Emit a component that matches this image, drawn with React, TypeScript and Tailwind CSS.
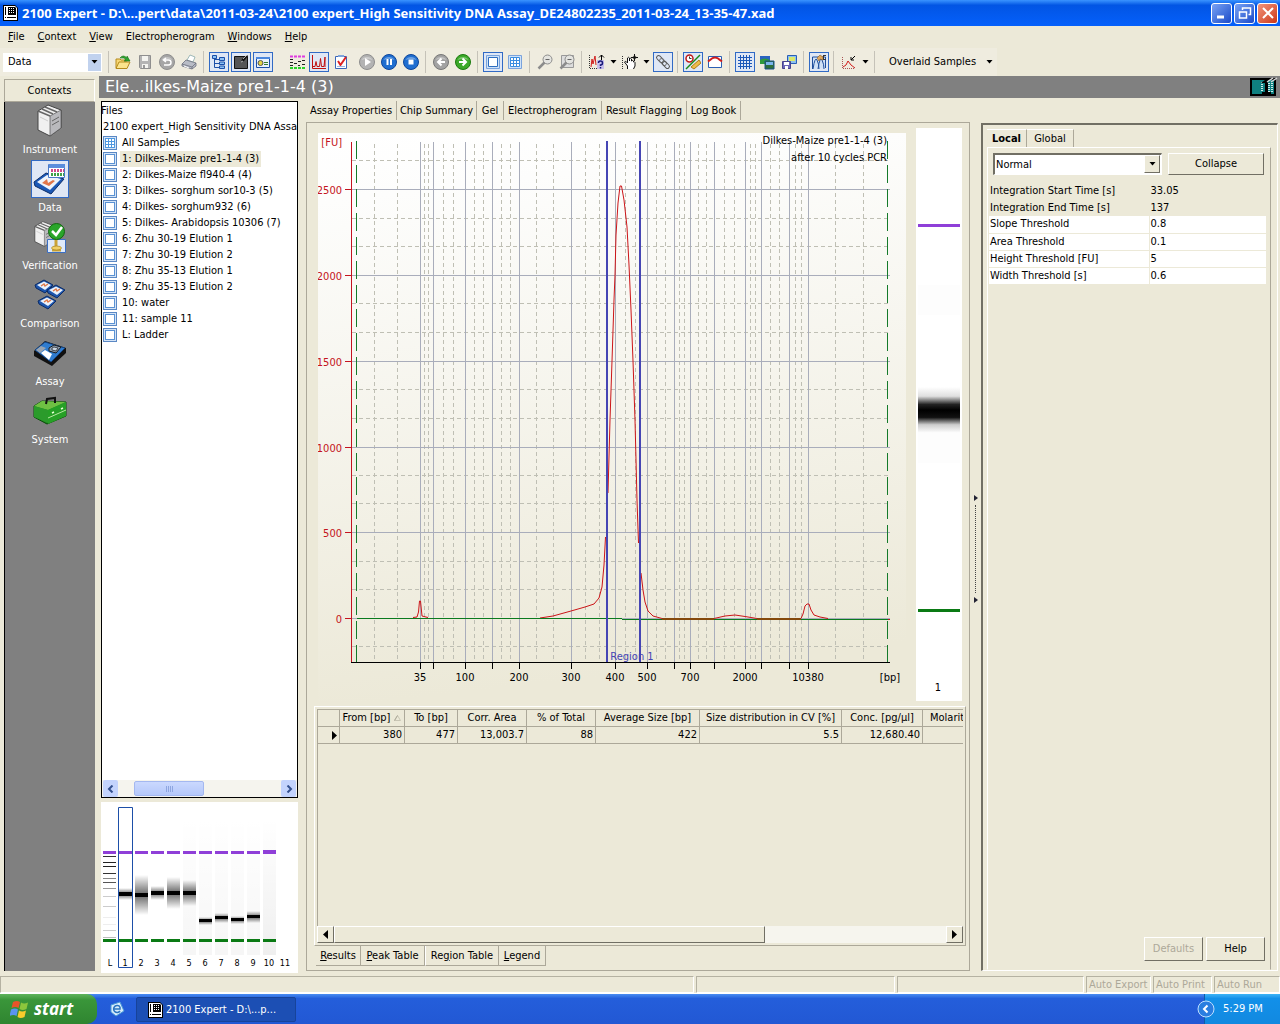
import { useState, type ReactNode } from 'react';
import clsx from 'clsx';

interface ToolItem {
  label: string;
  icon?: ReactNode;
  active?: boolean;
  menu?: boolean;
  gap?: 'line' | 'wide' | 'narrow';
}

const Icon = ({ children }: { children: ReactNode }) => (
  <svg viewBox="0 0 16 16" className="h-4 w-4 shrink-0" fill="none" aria-hidden="true">
    {children}
  </svg>
);

const Caret = () => (
  <svg viewBox="0 0 7 4" className="h-1 w-[7px]" aria-hidden="true">
    <path d="M.5 0h6l-3 3.500z" fill="#000" />
  </svg>
);

const Disc = ({ fill, edge, children }: { fill: string; edge: string; children: ReactNode }) => (
  <Icon>
    <circle cx="8" cy="8" r="7.5" fill={fill} stroke={edge} />
    <path d="M2.5 6a6 5 0 0 1 11 0q-5.500-2-11 0z" fill="#fff" opacity=".35" />
    {children}
  </Icon>
);

const Magnifier = () => (
  <>
    <circle cx="10.500" cy="5.500" r="4.500" fill="#e4e4e0" stroke="#8c8c8c" />
    <path d="M7.500 8.500 1.500 14.500" stroke="#8c8c8c" strokeWidth="2.500" />
    <path d="M8.500 5.500h4" stroke="#666" />
  </>
);

const AppIcon = () => (
  <Icon>
    <path d="M1 0h12l3 3v13H1z" fill="#000" />
    <path d="M2 1h11l2 2v12H2z" fill="#fff" />
    <path d="M6 2h7l1 1v7H6z" fill="#000" />
    <path d="M7.500 3v6M9.500 3v6M11.500 3v6" stroke="#fff" strokeDasharray="1 1" />
    <path d="M3.500 2v8" stroke="#000" />
    <path d="M3.500 12v1" stroke="#000" />
    <path d="M5 12.500h9" stroke="#000" />
  </Icon>
);

const tools: ToolItem[] = [
  {
    label: 'Open',
    icon: (
      <Icon>
        <path d="M1 14V5h4l1 1h5v2" fill="#f7d774" stroke="#b48a1c" />
        <path d="M1 14.500 4 8h11l-3 6.500z" fill="#fbe48c" stroke="#b48a1c" />
        <path d="M5 4q3-4 7 0V2l3 5h-6l2-1q-2-3-6-2z" fill="#2fa52f" stroke="#157015" strokeWidth=".6" />
      </Icon>
    ),
  },
  {
    label: 'Save',
    icon: (
      <Icon>
        <path d="M2.500 1.500h11v13h-10l-1-1z" fill="#b4b4b4" stroke="#8f8f8f" />
        <path d="M5 2h6v5H5zM5 10h6v4H5z" fill="#f4f4f0" />
        <path d="M6 11h2v3H6z" fill="#999" />
      </Icon>
    ),
  },
  {
    label: 'Undo',
    icon: (
      <Disc fill="#a6a6a6" edge="#8d8d8d">
        <path d="M5 11h4.500a2.500 2.500 0 0 0 0-5H5m2-2L4.500 6 7 8" stroke="#fff" strokeWidth="1.500" />
      </Disc>
    ),
  },
  {
    label: 'Print',
    icon: (
      <Icon>
        <path d="M6 6 9 1l5 2-2 5z" fill="#fff" stroke="#8aa" strokeWidth=".8" />
        <path d="m1 10 4-4 10 3v3l-4 3L1 12z" fill="#b8bcc6" stroke="#6b6f7c" strokeWidth=".8" />
        <path d="m1 10 10 3 4-4M11 13v2" stroke="#6b6f7c" strokeWidth=".8" />
        <path d="m3 12 5 2" stroke="#fff" />
      </Icon>
    ),
  },
  {
    label: 'Show tree',
    active: true,
    gap: 'line',
    icon: (
      <Icon>
        <path d="M3.500 4v9.500H8M3.500 5.500H8M3.500 9.500H8" stroke="#1b4fa8" />
        <path d="M1.500 1.500h4v3h-4zM8.500 3.500h5v3h-5zM8.500 8h5v2.500h-5zM8.500 12h5v2.500h-5z" fill="#8ec2f4" stroke="#1b4fa8" />
      </Icon>
    ),
  },
  {
    label: 'Annotations',
    active: true,
    icon: (
      <Icon>
        <path d="M1.500 2.500h13v12h-13z" fill="#555" stroke="#111" />
        <path d="m8 8 1-3 5-4 1 1-4 5z" fill="#111" />
        <path d="m10 5 4-4M8 8l2-1" stroke="#eee" strokeWidth=".7" />
      </Icon>
    ),
  },
  {
    label: 'Properties',
    active: true,
    icon: (
      <Icon>
        <path d="M1.500 3.500h13v10h-13z" fill="#e9f3fd" stroke="#1b4fa8" />
        <path d="M1 3h14v2H1z" fill="#4b87dd" />
        <circle cx="5.500" cy="9" r="2.500" fill="#e4d443" stroke="#555" />
        <path d="M9 8.500h4M9 10.500h4" stroke="#357b2c" />
      </Icon>
    ),
  },
  {
    label: 'Gel',
    gap: 'wide',
    icon: (
      <Icon>
        <path d="M1 2.500h15" stroke="#e03be0" strokeWidth="2" strokeDasharray="3 1" />
        <path d="M1 14h15" stroke="#2bd32b" strokeWidth="2" strokeDasharray="3 1" />
        <path d="M1 5.500h3M1 8.500h3M1 11.500h3M5 9.500h3M9 7.500h3M13 6.500h3M13 10.500h3M9 11.500h2" stroke="#222" />
      </Icon>
    ),
  },
  {
    label: 'Electropherogram',
    active: true,
    icon: (
      <Icon>
        <path d="M1.500 1v13.500H15" stroke="#c01010" />
        <path d="M2 12.500h2l1-5 1 5h2.500l1-8 1 8H13l1-9.500v10" stroke="#c01010" />
      </Icon>
    ),
  },
  {
    label: 'Results',
    icon: (
      <Icon>
        <path d="M2.500 2.500h11v12h-11z" fill="#fff" stroke="#3a66b8" />
        <path d="M5 1h6v2H5z" fill="#7ea4dc" />
        <path d="m5 7 2.500 4L13 3" stroke="#d22" strokeWidth="2" />
        <path d="M4 12.500h8" stroke="#9ab7e4" />
      </Icon>
    ),
  },
  {
    label: 'Start',
    gap: 'narrow',
    icon: (
      <Disc fill="#b3b3b3" edge="#8d8d8d">
        <path d="M6 4v8l6-4z" fill="#fff" />
      </Disc>
    ),
  },
  {
    label: 'Pause',
    icon: (
      <Disc fill="#1f6ed0" edge="#0e469a">
        <path d="M5.500 5h2v6h-2zM9 5h2v6H9z" fill="#fff" />
      </Disc>
    ),
  },
  {
    label: 'Stop',
    icon: (
      <Disc fill="#1f6ed0" edge="#0e469a">
        <path d="M5.500 5.500h5v5h-5z" fill="#fff" />
      </Disc>
    ),
  },
  {
    label: 'Previous',
    gap: 'line',
    icon: (
      <Disc fill="#a2a2a2" edge="#777">
        <path d="M12 8H5m3.500-3.500L5 8l3.500 3.500" stroke="#fff" strokeWidth="2" />
      </Disc>
    ),
  },
  {
    label: 'Next',
    icon: (
      <Disc fill="#3ba928" edge="#1c7a10">
        <path d="M4 8h7M7.500 4.500 11 8l-3.500 3.500" stroke="#fff" strokeWidth="2" />
      </Disc>
    ),
  },
  {
    label: 'Single view',
    active: true,
    gap: 'line',
    icon: (
      <Icon>
        <path d="M1.500 1.500h13v13h-13z" fill="#cfe2f8" stroke="#7aa3dc" />
        <path d="M3.500 3.500h9v9h-9z" fill="#fff" stroke="#2e6ec0" />
      </Icon>
    ),
  },
  {
    label: 'Grid view',
    icon: (
      <Icon>
        <path d="M1.500 1.500h13v13h-13z" fill="#cfe2f8" stroke="#7aa3dc" />
        <path d="M3.500 3.500h9v9h-9zM6.500 3v10M9.500 3v10M3 6.500h10M3 9.500h10" fill="#fff" stroke="#3b8de0" />
      </Icon>
    ),
  },
  { label: 'Zoom out', gap: 'line', icon: <Icon><Magnifier /></Icon> },
  {
    label: 'Zoom page',
    icon: (
      <Icon>
        <path d="M2.500 1.500h12v12h-12z" fill="#ddd" stroke="#999" />
        <Magnifier />
      </Icon>
    ),
  },
  {
    label: 'Peak help',
    menu: true,
    gap: 'line',
    icon: (
      <Icon>
        <path d="M.5 1v13M1 14.500h7" stroke="#333" strokeDasharray="1 1" />
        <path d="m2 13 1-8 1 5 2-8 1 9" stroke="#d01c1c" />
        <path d="M12.500 6V1M10 3.500l2.500-2.500L15 3.500" stroke="#000" />
        <path d="M8 6h7v9H8z" fill="#c8c0ec" />
        <path d="M9.500 9q0-2 2-2t2 2-2 2v1M11.500 13v1.500" stroke="#181878" strokeWidth="1.500" />
      </Icon>
    ),
  },
  {
    label: 'Pan',
    menu: true,
    icon: (
      <Icon>
        <path d="M.5 2v13" stroke="#333" strokeDasharray="1 1" />
        <path d="M5.500 15v-3l-3-4q1-2 3 1V4q1-1.500 2 0v3-2q1-1.500 2 0v2q1-1 2 0v1q1-.5 1.500.5V12l-1.500 3" fill="#fff" stroke="#111" />
        <path d="M12.500 0v7M9 3.500h7" stroke="#111" />
        <circle cx="12.500" cy="3.500" r="1.500" stroke="#111" strokeWidth=".7" />
      </Icon>
    ),
  },
  {
    label: 'Link axes',
    active: true,
    icon: (
      <Icon>
        <rect x="1" y="3" width="8" height="4" rx="2" transform="rotate(45 5 5)" stroke="#555" />
        <rect x="4" y="6" width="8" height="4" rx="2" transform="rotate(45 8 8)" stroke="#777" />
        <rect x="7" y="9" width="8" height="4" rx="2" transform="rotate(45 11 11)" stroke="#555" />
      </Icon>
    ),
  },
  {
    label: 'Time scale',
    active: true,
    gap: 'line',
    icon: (
      <Icon>
        <circle cx="4.500" cy="4.500" r="3.500" fill="#fff" stroke="#c01818" strokeWidth="1.500" />
        <path d="M4.500 2.500v2h2" stroke="#333" />
        <path d="M6 13 14 6l2 3-7 6z" fill="#eebc4a" stroke="#b07d18" />
        <path d="M1 15 15 1" stroke="#178a17" strokeWidth="1.500" />
      </Icon>
    ),
  },
  {
    label: 'Scale to peak',
    icon: (
      <Icon>
        <path d="M1.500 2.500h13v11h-13z" fill="#fff" stroke="#2a5fb4" />
        <path d="M1 7.500 3 6q5-5 10 0l2 1.500" stroke="#d01c1c" strokeWidth="2" />
      </Icon>
    ),
  },
  {
    label: 'Gridlines',
    active: true,
    gap: 'line',
    icon: (
      <Icon>
        <path d="M3.500 1v14M6.500 1v14M9.500 1v14M12.500 1v14M1 3.500h14M1 6.500h14M1 9.500h14M1 12.500h14" stroke="#1c58b8" />
      </Icon>
    ),
  },
  {
    label: 'Copy image',
    icon: (
      <Icon>
        <path d="M1 2h10v8H1z" fill="#2a63c0" />
        <path d="M1 6q5-3 10 0v4H1z" fill="#2f9a3c" />
        <path d="M6 7h9v8H6z" fill="#2f6f3a" stroke="#184e8a" />
        <path d="M7 8h7v3H7z" fill="#79b4ec" />
      </Icon>
    ),
  },
  {
    label: 'Export image',
    icon: (
      <Icon>
        <path d="M6.500 1.500h9v8h-9z" fill="#8cc1f0" stroke="#2a5fb4" />
        <path d="M8 3h6v4H8z" fill="#dbe86a" />
        <path d="M1.500 7.500h8v7h-8z" fill="#6c67b8" stroke="#47428e" />
        <path d="M3 8h5v3H3zM4 12h3v3H4z" fill="#fff" />
      </Icon>
    ),
  },
  {
    label: 'Overlay',
    active: true,
    gap: 'line',
    icon: (
      <Icon>
        <path d="M1.500 15V3h13v11" fill="#cfe0f6" stroke="#1f4e9c" />
        <path d="M2 15q2-13 4-9t2 9M7 15q2-13 4-9t2 9" stroke="#1f4e9c" />
        <path d="m6 4 3-3 3 2v3l-3-1-1 2z" fill="#e0a860" stroke="#8a5b20" strokeWidth=".6" />
        <path d="M12 1h3v1h-2v3h2v1h-3z" fill="#333" />
      </Icon>
    ),
  },
  {
    label: 'Peak find',
    menu: true,
    gap: 'line',
    icon: (
      <Icon>
        <path d="M1.500 3v12M2 14.500h12" stroke="#a55" strokeDasharray="1 1" />
        <path d="m2 13 3-2 2-4 3 4 4 3" stroke="#d01c1c" />
        <path d="m14 2-4 4m0-3v3h3" stroke="#000" />
      </Icon>
    ),
  },
];

const Slab = ({ children }: { children: ReactNode }) => (
  <svg viewBox="0 0 36 36" className="h-9 w-9" fill="none" aria-hidden="true">
    {children}
  </svg>
);

const Server = () => (
  <>
    <path d="m6 8 10-6 13 5v18L18 33 6 27z" fill="#f0f0f0" stroke="#444" />
    <path d="m18 13 11-6v18l-11 8z" fill="#b9b9bd" stroke="#555" strokeWidth=".7" />
    <path d="m6 8 12 5M10 6l11 5M13 4l12 5" stroke="#666" strokeWidth="1.500" />
    <path d="m20 18 7-4M20 22l7-4" stroke="#666" />
    <path d="m8 14 8 4" stroke="#ccc" />
  </>
);

const MiniChip = ({ x, y }: { x: number; y: number }) => (
  <g transform={`translate(${x} ${y})`}>
    <path d="m0 5 9-5 9 5-8 8-9-5z" fill="#1d55ad" stroke="#0d2c66" />
    <path d="m2 5 7-3.500L16 5l-6 5z" fill="#e9f2fd" />
    <path d="m6 6 3-2 1 2 3-2" stroke="#e07a4a" strokeWidth="1.500" />
  </g>
);

const contexts: { name: string; icon: ReactNode }[] = [
  { name: 'Instrument', icon: <Slab><Server /></Slab> },
  {
    name: 'Data',
    icon: (
      <Slab>
        <path d="m2 21 12-9 18 6-13 15-16-8z" fill="#1b58b6" stroke="#0c2c68" />
        <path d="m5 21 10-7 14 4-11 11z" fill="#eef4fc" />
        <path d="m10 22 5-4 1 4 5-3 2 1-6 5z" fill="#e0764a" />
        <path d="M16.500 3.500h16v13h-16z" fill="#fff" stroke="#4a7ac8" />
        <path d="M17 3h16v4H17z" fill="#5a8ddc" />
        <path d="M19 9.500h13" stroke="#d04a8a" strokeWidth="3" strokeDasharray="2 1" />
        <path d="M19 13.500h13" stroke="#3ea04a" strokeWidth="3" strokeDasharray="2 1" />
      </Slab>
    ),
  },
  {
    name: 'Verification',
    icon: (
      <Slab>
        <g transform="translate(-2 1) scale(.8)"><Server /></g>
        <path d="M15.500 20.500h18v13h-18z" fill="#dfeafa" stroke="#3a6fc4" />
        <path d="M24 19v9M20 31h9" stroke="#caa438" strokeWidth="3" />
        <ellipse cx="24.500" cy="29" rx="5" ry="2" fill="#f0d068" stroke="#a8821c" strokeWidth=".7" />
        <circle cx="24.500" cy="12.500" r="8" fill="#2aa52a" stroke="#11660f" />
        <path d="m20 12 4 4 6-8" stroke="#fff" strokeWidth="2.500" />
      </Slab>
    ),
  },
  {
    name: 'Comparison',
    icon: (
      <Slab>
        <MiniChip x={3} y={3} />
        <MiniChip x={15} y={8} />
        <MiniChip x={6} y={19} />
      </Slab>
    ),
  },
  {
    name: 'Assay',
    icon: (
      <Slab>
        <path d="m2 16 11-10 21 7v5L20 31 2 21z" fill="#111" />
        <path d="m3 15 10-8 20 6-14 14z" fill="#2f7ccf" stroke="#14427e" />
        <path d="m4 15 5-4 5 2-6 5z" fill="#9aa4b0" />
        <path d="m9 18 4-3 7 4-3 6z" fill="#fff" />
        <path d="m17 13 5-3 7 2-5 6-7-2z" fill="#8fa0b4" stroke="#1a1a1a" />
        <path d="m20 13 2-1 4 1-2 3-4-1z" fill="#c9d4e0" stroke="#1a1a1a" strokeWidth=".7" />
      </Slab>
    ),
  },
  {
    name: 'System',
    icon: (
      <Slab>
        <path d="m2 13 8-5 24 1v14L15 31 2 24z" fill="#1f8a1f" stroke="#0a4a0a" />
        <path d="m2 13 8-5 24 1-18 8z" fill="#6fc043" />
        <path d="m2 13 14 4v13L2 24z" fill="#2b9b2b" />
        <path d="m16 17 18-8v14l-18 8z" fill="#26a026" />
        <path d="m16 25 18-8" stroke="#b4e8a0" />
        <path d="m20 20 2-1m7-3 2-1" stroke="#e8ffd8" strokeWidth="1.500" />
        <path d="m14 11 1-5 8-1v5" stroke="#111" strokeWidth="2" />
      </Slab>
    ),
  },
];

const samples = [
  '1: Dilkes-Maize pre1-1-4 (3)',
  '2: Dilkes-Maize fl940-4 (4)',
  '3: Dilkes- sorghum sor10-3 (5)',
  '4: Dilkes- sorghum932 (6)',
  '5: Dilkes- Arabidopsis 10306 (7)',
  '6: Zhu 30-19 Elution 1',
  '7: Zhu 30-19 Elution 2',
  '8: Zhu 35-13 Elution 1',
  '9: Zhu 35-13 Elution 2',
  '10: water',
  '11: sample 11',
  'L: Ladder',
];

const mainTabs = [
  { name: 'Assay Properties', width: 'w-[91px]' },
  { name: 'Chip Summary', width: 'w-[80px]' },
  { name: 'Gel', width: 'w-[27px]' },
  { name: 'Electropherogram', width: 'w-[98px]' },
  { name: 'Result Flagging', width: 'w-[85px]' },
  { name: 'Log Book', width: 'w-[54px]' },
];

const solidX = [420, 433, 465, 492, 519, 571, 615, 647, 674, 690, 714, 745, 761, 789, 808];
const dashedX = [
  374, 397, 424, 428, 443, 453, 474, 483, 501, 510, 536, 553, 585, 599, 625, 635, 656, 665, 679, 684, 698, 706,
  724, 734, 750, 755, 770, 779, 795, 801, 835, 863,
];
const solidY = [
  { y: 189, label: '2500' },
  { y: 275, label: '2000' },
  { y: 361, label: '1500' },
  { y: 447, label: '1000' },
  { y: 532, label: '500' },
  { y: 618, label: '0' },
];
const dashedY = [160, 218, 246, 303, 332, 389, 418, 475, 503, 561, 589, 646];
const xLabels: [number, string][] = [
  [420, '35'],
  [465, '100'],
  [519, '200'],
  [571, '300'],
  [615, '400'],
  [647, '500'],
  [690, '700'],
  [745, '2000'],
  [808, '10380'],
];

const trace =
  'M413 617.500L417 617L418.500 612L419.500 601H420.500L422 616L428 617.500' +
  'M540 618L553 616L571 611L585 607L594 604L599 598L602 587L604 565L605.500 537' +
  'M608 493L610 420L612 361L614 300L615 275L616 235L618 203L620 186H621.500L624 200L627 227L629 265L631 310L633 361L635 420L637 500L638.500 543' +
  'M641 573L643 590L645 602L648 611L653 616L662 618.500M714 618.500L725 616L735 615L745 616.500L757 618.500' +
  'M801 618.500L803 614L805 606L807 604H809L811 610L814 615L820 617L828 618.500';

function Chart() {
  return (
    <svg viewBox="318 133 588 568" className="h-[568px] w-full min-w-0 flex-1 text-[11px]" role="img" aria-label="Electropherogram">
      <defs>
        <linearGradient id="chartPaper" x1="0" y1="0" x2=".12" y2="1">
          <stop offset="0" stopColor="#fff" />
          <stop offset=".12" stopColor="#fdfdfc" />
          <stop offset="1" stopColor="#ece9d8" />
        </linearGradient>
      </defs>
      <rect x="318" y="133" width="588" height="568" fill="url(#chartPaper)" />
      <g fill="none" shapeRendering="crispEdges">
        {dashedX.map((x) => (
          <path key={x} d={`M${x + 0.5} 144V662`} stroke="#bfbfb4" strokeDasharray="4 3" />
        ))}
        {dashedY.map((y) => (
          <path key={y} d={`M352 ${y + 0.5}H888`} stroke="#bfbfb4" strokeDasharray="4 3" />
        ))}
        {solidX.map((x) => (
          <path key={x} d={`M${x + 0.5} 142V662`} stroke="#a9adbb" />
        ))}
        {solidY.map(({ y }) => (
          <path key={y} d={`M352 ${y + 0.5}H890`} stroke="#a9adbb" />
        ))}
      </g>
      <path d={trace} fill="none" stroke="#cc1518" />
      <g fill="none" shapeRendering="crispEdges">
        <path d="M357 618.500H622M622 619.500H888" stroke="#0a7a1e" />
        <path d="M662 619H714M757 619H801" stroke="#84490c" strokeWidth="2" />
        <path d="M888 619.500H890" stroke="#c41420" />
        <path d="M356.500 141V662M887.500 141V662" stroke="#157a2a" strokeDasharray="18 6" />
        <path d="M607 141V662M640 141V662" stroke="#4545b4" strokeWidth="2" />
        <path d="M351.500 142V662" stroke="#c41420" />
        {solidY.map(({ y }) => (
          <path key={y} d={`M345 ${y + 0.5}H351`} stroke="#c41420" />
        ))}
        <path d="M351 662.500H890" stroke="#000" />
        {solidX.map((x) => (
          <path key={x} d={`M${x + 0.5} 662V669`} stroke="#000" />
        ))}
      </g>
      <g fill="#c41420" textAnchor="end">
        <text x="342" y="146">[FU]</text>
        {solidY.map(({ y, label }) => (
          <text key={y} x="342" y={y + 5}>{label}</text>
        ))}
      </g>
      <g textAnchor="middle">
        {xLabels.map(([x, label]) => (
          <text key={label} x={x} y="681">{label}</text>
        ))}
        <text x="890" y="681">[bp]</text>
        <text x="632" y="660" fill="#4545b4">Region 1</text>
      </g>
      <g textAnchor="end">
        <text x="887" y="144">Dilkes-Maize pre1-1-4 (3)</text>
        <text x="887" y="161">after 10 cycles PCR</text>
      </g>
    </svg>
  );
}

function Lane() {
  return (
    <svg viewBox="916 128 46 573" className="h-[573px] w-[46px] shrink-0 text-[11px]" role="img" aria-label="Gel lane 1">
      <defs>
        <linearGradient id="laneBand" x1="0" y1="0" x2="0" y2="1">
          <stop offset="0" stopColor="#fff" />
          <stop offset=".2" stopColor="#e0e0e0" />
          <stop offset=".38" stopColor="#222" />
          <stop offset=".5" stopColor="#000" />
          <stop offset=".66" stopColor="#111" />
          <stop offset=".82" stopColor="#ccc" />
          <stop offset="1" stopColor="#fff" />
        </linearGradient>
      </defs>
      <path d="M916 128h46v573h-46z" fill="#fff" />
      <path d="M918 285h42v30h-42zM918 433h42v30h-42z" fill="#fdfdfd" />
      <path d="M918 387h42v46h-42z" fill="url(#laneBand)" />
      <path d="M918 224h42v3h-42z" fill="#8f3fd8" />
      <path d="M918 609h42v3h-42z" fill="#0a7a14" />
      <text x="938" y="691" textAnchor="middle">1</text>
    </svg>
  );
}

const ladder: [number, string][] = [
  [856, '#333'], [862, '#222'], [866, '#222'], [873, '#333'], [878, '#888'], [882, '#555'], [888, '#999'],
  [896, '#ccc'], [906, '#ccc'], [917, '#eee'], [924, '#eee'], [930, '#ccc'], [937, '#bbb'],
];
const gelLanes = [
  { name: '1', band: 894, glow: 6, tint: '#fff' },
  { name: '2', band: 895, glow: 20, tint: '#fff' },
  { name: '3', band: 893, glow: 7, tint: '#fff' },
  { name: '4', band: 893, glow: 16, tint: '#fff' },
  { name: '5', band: 893, glow: 13, tint: '#f6f6f6' },
  { name: '6', band: 921, glow: 4, tint: '#f6f6f6' },
  { name: '7', band: 918, glow: 5, tint: '#f6f6f6' },
  { name: '8', band: 920, glow: 4, tint: '#f6f6f6' },
  { name: '9', band: 917, glow: 6, tint: '#f6f6f6' },
  { name: '10', band: 0, glow: 0, tint: '#efefef' },
  { name: '11', band: -1, glow: 0, tint: '#fff' },
];

function GelOverview() {
  return (
    <svg viewBox="101 802 197 171" className="h-[171px] w-full bg-white text-[9px]" role="img" aria-label="Gel overview">
      <defs>
        <linearGradient id="glow" x1="0" y1="0" x2="0" y2="1">
          <stop offset="0" stopColor="#000" stopOpacity="0" />
          <stop offset=".5" stopColor="#000" stopOpacity=".6" />
          <stop offset="1" stopColor="#000" stopOpacity="0" />
        </linearGradient>
        <linearGradient id="laneFade" x1="0" y1="0" x2="0" y2="1">
          <stop offset="0" stopColor="#fff" />
          <stop offset=".7" stopColor="#fff" stopOpacity=".3" />
          <stop offset="1" stopColor="#fff" stopOpacity="0" />
        </linearGradient>
      </defs>
      {ladder.map(([y, color]) => (
        <rect key={y} x="103" y={y} width="13" height="1" fill={color} />
      ))}
      <path d="M103 851h13v3h-13z" fill="#8f3fd8" />
      <path d="M103 939h13v3h-13z" fill="#0a7a14" />
      <text x="110" y="966" textAnchor="middle">L</text>
      {gelLanes.map(({ name, band, glow, tint }, i) => {
        const x = 119 + i * 16;
        const thick = band > 910 ? 3 : 4;
        return (
          <g key={name}>
            {band >= 0 && (
              <>
                <rect x={x} y="820" width="13" height="135" fill={tint} />
                <rect x={x} y="820" width="13" height="135" fill="url(#laneFade)" />
                {band > 0 && <rect x={x} y={band - glow} width="13" height={glow * 2} fill="url(#glow)" />}
                {band > 0 && <rect x={x} y={band - 2} width="13" height={thick} fill="#000" />}
                <rect x={x} y={name === '10' ? 850 : 851} width="13" height={name === '10' ? 4 : 3} fill="#8f3fd8" />
                <rect x={x} y="939" width="13" height="3" fill="#0a7a14" />
              </>
            )}
            <text x={x + 6} y="966" textAnchor="middle">{name}</text>
          </g>
        );
      })}
      <path d="M118.500 807.500h14v160h-14z" fill="none" stroke="#1d4fa8" />
    </svg>
  );
}

const SampleIcon = ({ grid }: { grid?: boolean }) => (
  <svg viewBox="0 0 14 14" className="h-3.5 w-3.5 shrink-0" fill="none" shapeRendering="crispEdges" aria-hidden="true">
    <path d="M.5.5h13v13H.5z" fill="#d4e4f7" stroke="#5b88c4" />
    {grid ? (
      <path d="M2.500 2.500h9v9h-9zM5.500 2v10M8.500 2v10M2 5.500h10M2 8.500h10" fill="#fff" stroke="#4f98e0" />
    ) : (
      <path d="M2.500 2.500h9v9h-9z" fill="#fff" stroke="#5a92d4" />
    )}
  </svg>
);

const Chevron = ({ flip }: { flip?: boolean }) => (
  <svg viewBox="0 0 8 8" className={clsx('h-2 w-2', flip && 'rotate-180')} fill="none" aria-hidden="true">
    <path d="M5.500.5 2 4l3.500 3.500" stroke="#33508f" strokeWidth="2" />
  </svg>
);

const Wedge = ({ flip }: { flip?: boolean }) => (
  <svg viewBox="0 0 5 9" className={clsx('h-[9px] w-[5px]', flip && 'rotate-180')} aria-hidden="true">
    <path d="M5 0v9L0 4.500z" fill="#000" />
  </svg>
);

const SmallWedge = () => (
  <svg viewBox="0 0 4 6" className="h-1.5 w-1" aria-hidden="true">
    <path d="M0 0v6l4-3z" fill="#223" />
  </svg>
);

const columns = [
  { name: 'From [bp]', value: '380', width: 'w-[65px]', sorted: true },
  { name: 'To [bp]', value: '477', width: 'w-[53px]' },
  { name: 'Corr. Area', value: '13,003.7', width: 'w-[69px]' },
  { name: '% of Total', value: '88', width: 'w-[69px]' },
  { name: 'Average Size [bp]', value: '422', width: 'w-[104px]' },
  { name: 'Size distribution in CV [%]', value: '5.5', width: 'w-[142px]' },
  { name: 'Conc. [pg/µl]', value: '12,680.40', width: 'w-[81px]' },
];

const settings = [
  { name: 'Integration Start Time [s]', value: '33.05', locked: true },
  { name: 'Integration End Time [s]', value: '137', locked: true },
  { name: 'Slope Threshold', value: '0.8' },
  { name: 'Area Threshold', value: '0.1' },
  { name: 'Height Threshold [FU]', value: '5' },
  { name: 'Width Threshold [s]', value: '0.6' },
];

const raised = 'border border-t-white border-l-white border-r-[#716f64] border-b-[#716f64] bg-[#ece9d8]';

function TitleBar() {
  const box = 'flex h-[21px] w-[21px] items-center justify-center rounded-[3px] border border-white';
  return (
    <header className="flex h-[26px] shrink-0 items-center bg-linear-to-b from-[#3a93ff] via-[#0255e4] via-20% to-[#0560fb] pr-[2px] pl-[2px]">
      <AppIcon />
      <h1 className="ml-1 flex-1 font-['Noto_Sans','Open_Sans',sans-serif] text-[13px] leading-5 font-bold whitespace-nowrap text-white">
        2100 Expert - D:\...pert\data\2011-03-24\2100 expert_High Sensitivity DNA Assay_DE24802235_2011-03-24_13-35-47.xad
      </h1>
      <div className="flex gap-[2px]">
        <button aria-label="Minimize" className={clsx(box, 'bg-linear-to-br from-[#7aa2f4] to-[#1c48c8]')}>
          <Icon><path d="M3 12h7" stroke="#fff" strokeWidth="3" /></Icon>
        </button>
        <button aria-label="Restore" className={clsx(box, 'bg-linear-to-br from-[#7aa2f4] to-[#1c48c8]')}>
          <Icon>
            <path d="M5.500 5V3h8v6.500h-2" stroke="#fff" strokeWidth="1.500" />
            <path d="M2.500 7h7v6h-7z" stroke="#fff" strokeWidth="1.500" />
          </Icon>
        </button>
        <button aria-label="Close" className={clsx(box, 'bg-linear-to-br from-[#f0937a] to-[#cc3310]')}>
          <Icon><path d="m3 3 10 10M13 3 3 13" stroke="#fff" strokeWidth="2" /></Icon>
        </button>
      </div>
    </header>
  );
}

function MenuBar() {
  return (
    <nav className="flex h-[22px] shrink-0 items-center gap-[13px] pl-2">
      {['File', 'Context', 'View', 'Electropherogram', 'Windows', 'Help'].map((item) => (
        <button key={item} className="leading-4">
          {item === 'Electropherogram' ? item : <><span className="underline">{item[0]}</span>{item.slice(1)}</>}
        </button>
      ))}
    </nav>
  );
}

function Toolbar() {
  return (
    <div className="flex h-7 shrink-0 items-center bg-[#efecdf]" role="toolbar">
      <div className="relative ml-[3px] flex w-[99px]">
        <select aria-label="Context" className="h-[19px] w-full appearance-none bg-white pl-[5px] outline-none">
          <option>Data</option>
        </select>
        <span className="pointer-events-none absolute top-px right-px flex h-[17px] w-[13px] items-center justify-center bg-[#c1d2ee]">
          <Caret />
        </span>
      </div>
      <span className="mr-[3px] ml-[6px] h-[22px] w-px bg-[#c5c2b8]" />
      {tools.map(({ label, icon, active, menu, gap }) => (
        <div key={label} className="flex items-center">
          {gap === 'line' && <span className="mr-1 ml-[3px] h-[22px] w-px bg-[#c5c2b8]" />}
          {gap === 'wide' && <span className="w-3" />}
          {gap === 'narrow' && <span className="w-1" />}
          <button
            aria-label={label}
            className={clsx(
              'mx-px flex h-5 w-5 items-center justify-center border',
              active ? 'border-[#316ac5] bg-[#dfe7f5]' : 'border-transparent',
            )}
          >
            {icon}
          </button>
          {menu && (
            <button aria-label={`${label} options`} className="flex h-5 w-[11px] items-center justify-center">
              <Caret />
            </button>
          )}
        </div>
      ))}
      <span className="mr-[14px] ml-[3px] h-[22px] w-px bg-[#c5c2b8]" />
      <button className="flex items-center gap-[10px]">
        Overlaid Samples
        <Caret />
      </button>
      <span className="ml-1 h-full flex-1 bg-[#ece9d8]" />
    </div>
  );
}

function ContextBar({ current, onSelect }: { current: string; onSelect: (name: string) => void }) {
  return (
    <aside className="flex w-[99px] shrink-0 flex-col pt-[3px] pr-1 pb-1 pl-1">
      <h2 className="flex h-[23px] shrink-0 items-center justify-center border border-[#aca899] border-r-white leading-4">
        Contexts
      </h2>
      <div className="flex flex-1 flex-col items-center border-l border-black bg-[#808080]">
        {contexts.map(({ name, icon }) => (
          <button key={name} onClick={() => onSelect(name)} className="flex h-[58px] w-full flex-col items-center text-white">
            <span
              className={clsx(
                'flex h-[38px] w-[38px] shrink-0 items-center justify-center border',
                name === current ? 'border-[#316ac5] bg-[#dfe7f5]' : 'border-transparent',
              )}
            >
              {icon}
            </span>
            <span className="leading-5">{name}</span>
          </button>
        ))}
      </div>
    </aside>
  );
}

function FileTree({ selected, onSelect }: { selected: number; onSelect: (i: number) => void }) {
  return (
    <div className="flex w-[197px] shrink-0 flex-col gap-1 pb-[2px]">
      <div className="flex min-h-0 flex-1 flex-col border border-black bg-white">
        <div className="flex-1 overflow-hidden pt-px leading-4 whitespace-nowrap">
          <p className="-ml-px">Files</p>
          <p className="pl-px">2100 expert_High Sensitivity DNA Assay</p>
          <button className="flex items-center gap-[3px] pl-px">
            <SampleIcon grid />
            <span className="px-[2px]">All Samples</span>
          </button>
          {samples.map((sample, i) => (
            <button key={sample} onClick={() => onSelect(i)} className="flex items-center gap-[3px] pl-px">
              <SampleIcon />
              <span className={clsx('px-[2px]', i === selected && 'bg-[#ece9d8]')}>{sample}</span>
            </button>
          ))}
        </div>
        <div className="flex h-[17px] shrink-0 items-stretch bg-[#f5f4ee] px-px">
          <button aria-label="Scroll left" className="flex w-[15px] items-center justify-center rounded-[2px] bg-[#c3d3fd]">
            <Chevron />
          </button>
          <div className="flex flex-1 py-px">
            <span className="ml-4 flex w-[70px] items-center justify-center gap-px rounded-[2px] border border-[#a4b8f0] bg-linear-to-b from-[#cad8fe] to-[#b5c8fa]">
              {[0, 1, 2, 3].map((n) => <i key={n} className="h-1.5 w-px bg-[#8ea6e0]" />)}
            </span>
          </div>
          <button aria-label="Scroll right" className="flex w-[15px] items-center justify-center rounded-[2px] bg-[#c3d3fd]">
            <Chevron flip />
          </button>
        </div>
      </div>
      <GelOverview />
    </div>
  );
}

function ResultTable() {
  const cell = 'border-r border-b border-[#aca899]';
  return (
    <div className="mt-[5px] mr-[3px] ml-[7px] flex min-h-0 flex-1 flex-col border border-white border-r-[#aca899] border-b-[#aca899] p-[2px]">
      <div className="min-h-0 flex-1 overflow-hidden border-t border-l border-[#aca899]">
        <table className="w-full table-fixed border-separate border-spacing-0 whitespace-nowrap">
          <thead>
            <tr className="h-4">
              <th className={clsx(cell, 'w-[22px] p-0')} aria-label="Row" />
              {columns.map(({ name, width, sorted }) => (
                <th key={name} className={clsx(cell, width, 'p-0 leading-4 font-normal')}>
                  <span className="flex items-center justify-center gap-1">
                    {name}
                    {sorted && (
                      <svg viewBox="0 0 7 6" className="h-1.5 w-[7px]" fill="none" aria-hidden="true">
                        <path d="m.5 5.500 3-5 3 5z" stroke="#c8c5b4" />
                        <path d="m.5 5.500 3-5" stroke="#aca899" />
                      </svg>
                    )}
                  </span>
                </th>
              ))}
              <th className="overflow-hidden border-b border-[#aca899] p-0 pl-[7px] text-left leading-4 font-normal">Molarity</th>
            </tr>
          </thead>
          <tbody>
            <tr className="h-4">
              <td className={clsx(cell, 'p-0')}>
                <span className="flex justify-end pr-[2px]"><Wedge flip /></span>
              </td>
              {columns.map(({ name, value }) => (
                <td key={name} className={clsx(cell, 'p-0 pr-[2px] text-right leading-4')}>{value}</td>
              ))}
              <td className="border-b border-[#aca899] p-0" />
            </tr>
          </tbody>
        </table>
      </div>
      <div className="flex h-[17px] shrink-0 bg-[#f6f5ee]">
        <button aria-label="Scroll left" className={clsx(raised, 'flex w-[17px] items-center justify-center')}><Wedge /></button>
        <span className={clsx(raised, 'w-2/3')} />
        <span className="flex-1" />
        <button aria-label="Scroll right" className={clsx(raised, 'flex w-[17px] items-center justify-center')}><Wedge flip /></button>
      </div>
    </div>
  );
}

function CenterPanel() {
  const [tab, setTab] = useState('Region Table');
  const bottomTabs = [
    { name: 'Results', at: 0, width: 'w-[45px]' },
    { name: 'Peak Table', at: 0, width: 'w-[64px]' },
    { name: 'Region Table', at: 2, width: 'w-[74px]' },
    { name: 'Legend', at: 0, width: 'w-[47px]' },
  ];
  return (
    <main className="ml-2 flex min-w-0 flex-1 flex-col pb-1">
      <div className="flex h-[21px] shrink-0" role="tablist">
        {mainTabs.map(({ name, width }) => (
          <button
            key={name}
            role="tab"
            aria-selected={name === 'Electropherogram'}
            className={clsx('h-[19px] border-r border-[#aca899] pt-px leading-[18px] whitespace-nowrap', width)}
          >
            {name}
          </button>
        ))}
      </div>
      <div className="flex min-h-0 flex-1 flex-col border border-[#aca899]">
        <div className="flex shrink-0 items-end gap-[10px] pt-[5px] pr-[7px] pl-[11px]">
          <Chart />
          <Lane />
        </div>
        <ResultTable />
        <div className="flex h-6 shrink-0 pl-[9px]" role="tablist">
          {bottomTabs.map(({ name, at, width }) => (
            <button
              key={name}
              role="tab"
              aria-selected={name === tab}
              onClick={() => setTab(name)}
              className={clsx('h-5 border-r border-b border-[#aca899] whitespace-nowrap', width, name === tab && 'border-l border-l-white')}
            >
              {name.slice(0, at)}
              <span className="underline">{name[at]}</span>
              {name.slice(at + 1)}
            </button>
          ))}
        </div>
      </div>
    </main>
  );
}

function Splitter() {
  return (
    <div className="flex w-[11px] shrink-0 flex-col items-center justify-center pt-[22px]" role="separator">
      <div className="flex h-[108px] flex-col items-center justify-between">
        <SmallWedge />
        <i className="my-1 w-px flex-1 border-l border-dotted border-[#444]" />
        <SmallWedge />
      </div>
    </div>
  );
}

function SettingsPanel() {
  return (
    <aside className="mr-0.5 mt-[22px] mb-1 flex w-[297px] shrink-0 flex-col border border-t-2 border-l-2 border-[#716f64] border-r-white border-b-white px-1 pt-1">
      <div className="flex h-[18px] shrink-0 leading-[18px]" role="tablist">
        <button role="tab" aria-selected="true" className="w-10 border-t border-r border-t-white border-r-[#aca899] font-bold">Local</button>
        <button role="tab" aria-selected="false" className="w-[47px] border-t border-r border-t-white border-r-[#aca899]">Global</button>
      </div>
      <div className="mr-[2px] flex flex-1 flex-col border border-white border-r-[#aca899] border-b-transparent pt-[5px]">
        <div className="flex h-[22px] gap-1.5 pr-1.5 pl-[5px]">
          <div className="relative flex min-w-0 flex-1">
            <select
              aria-label="Sensitivity"
              className="w-full appearance-none border border-t-2 border-l-2 border-[#716f64] border-r-white border-b-white bg-white pl-px outline-none"
            >
              <option>Normal</option>
            </select>
            <span className={clsx(raised, 'pointer-events-none absolute top-[2px] right-[2px] bottom-[2px] flex w-4 items-center justify-center')}>
              <Caret />
            </span>
          </div>
          <button className={clsx(raised, 'w-[96px]')}>Collapse</button>
        </div>
        <table className="mt-[7px] mr-1 ml-px table-fixed border-collapse leading-4">
          <tbody>
            {settings.map(({ name, value, locked }) => (
              <tr key={name} className={clsx('h-[17px]', !locked && 'border-b border-[#ece9d8] bg-white')}>
                <th scope="row" className="w-[160px] border-r border-[#ece9d8] p-0 pl-px text-left font-normal">{name}</th>
                <td className="p-0 pl-px">{value}</td>
              </tr>
            ))}
          </tbody>
        </table>
        <div className="mt-auto mr-[5px] mb-2 flex h-6 justify-end gap-[3px]">
          <button disabled className={clsx(raised, 'w-[59px] text-[#aca899]')}>Defaults</button>
          <button className={clsx(raised, 'w-[59px]')}>Help</button>
        </div>
      </div>
    </aside>
  );
}

function StatusBar() {
  const cell = 'flex items-center border border-[#b5b2a2] border-r-white border-b-white pt-px pl-[2px] text-[#aca899] whitespace-nowrap';
  return (
    <footer className="flex h-[19px] shrink-0 gap-[2px] border-b border-white pt-px">
      <span className={clsx(cell, 'flex-1')} />
      <span className={clsx(cell, 'w-[199px]')} />
      <span className={clsx(cell, 'w-[187px]')} />
      <span className={clsx(cell, 'w-[65px]')}>Auto Export</span>
      <span className={clsx(cell, 'w-[59px]')}>Auto Print</span>
      <span className={clsx(cell, 'w-[66px]')}>Auto Run</span>
    </footer>
  );
}

function Taskbar() {
  return (
    <footer className="flex h-[30px] shrink-0 items-stretch bg-linear-to-b from-[#4a8df2] via-[#245edb] via-15% to-[#2258d4] text-white">
      <button className="flex w-[97px] items-center gap-[4px] rounded-r-[10px] bg-linear-to-b from-[#5fb45c] via-[#3a963a] via-20% to-[#2f8530] pl-[10px] font-['Open_Sans','Noto_Sans',sans-serif] text-[17px] font-bold italic">
        <svg viewBox="0 0 20 20" className="h-5 w-5" aria-hidden="true">
          <path d="M3 3q4-2 7 0L8.500 9q-3-2-7 0z" fill="#e8542a" />
          <path d="M11 3.500q3 2 7 0L16.500 10q-4 2-7 0z" fill="#8cc63c" />
          <path d="M1 10.500q4-2 7 0L6.500 17q-3-2-7 0z" fill="#5a94f0" />
          <path d="M9 11.500q3 2 7 0L14.500 18q-4 2-7 0z" fill="#f8cc2c" />
        </svg>
        start
      </button>
      <button aria-label="Browser" className="ml-3 flex items-center">
        <Icon>
          <path d="M2 4 11 1l4 9-8 5-5-4z" fill="#d8ecfb" stroke="#4b9bd8" />
          <path d="M11 6a3.500 3.500 0 1 0 0 4M5 8h6V6" stroke="#2a74c0" strokeWidth="1.500" />
        </Icon>
      </button>
      <button className="mt-[3px] mb-[2px] ml-[11px] flex w-[160px] items-center gap-[3px] rounded-[2px] border border-[#17439a] bg-[#1c4fb4] pl-[10px]">
        <AppIcon />
        <span className="truncate">2100 Expert - D:\...p...</span>
      </button>
      <div className="ml-auto flex w-[76px] items-center border-l border-[#0f5ca8] bg-linear-to-b from-[#3cb4f6] via-[#1290e9] via-15% to-[#1289e0]">
        <button aria-label="Show hidden icons" className="-ml-2">
          <svg viewBox="0 0 18 18" className="h-[18px] w-[18px]" fill="none" aria-hidden="true">
            <circle cx="9" cy="9" r="8" fill="#2a7ee0" stroke="#bfe0ff" />
            <path d="M10.500 5.500 7 9l3.500 3.500" stroke="#fff" strokeWidth="2" />
          </svg>
        </button>
        <time className="ml-2 whitespace-nowrap">5:29 PM</time>
      </div>
    </footer>
  );
}

export default function App() {
  const [context, setContext] = useState('Data');
  const [sample, setSample] = useState(0);

  return (
    <div className="flex h-screen min-h-[900px] flex-col overflow-hidden bg-[#ece9d8] font-['DejaVu_Sans_Condensed','Noto_Sans',sans-serif] text-[11px] leading-[14px] text-black">
      <TitleBar />
      <MenuBar />
      <Toolbar />
      <div className="flex min-h-0 flex-1">
        <ContextBar current={context} onSelect={setContext} />
        <div className="flex min-w-0 flex-1 flex-col">
          <div className="flex h-[22px] shrink-0 items-center justify-between bg-[#808080] pr-[2px] pl-1.5">
            <h2 className="font-['DejaVu_Sans',sans-serif] text-[16px] leading-5 text-white">Ele...ilkes-Maize pre1-1-4 (3)</h2>
            <svg viewBox="0 0 28 20" className="h-5 w-7" fill="none" aria-hidden="true">
              <path d="M1 2h24v16H1z" fill="#0f8080" stroke="#000" strokeWidth="2" />
              <path d="M12 5v10M19 6v9M22 6v9" stroke="#cfeaea" strokeWidth="2" strokeDasharray="1 1" />
              <path d="m11 6 4-3h3v12h3v2h-9v-2h3V6z" fill="#000" />
              <path d="m17 5 6-4M21 5l6-4" stroke="#d8d8d8" strokeWidth="1.500" />
            </svg>
          </div>
          <div className="flex min-h-0 flex-1 pt-[3px] pl-[2px]">
            <FileTree selected={sample} onSelect={setSample} />
            <CenterPanel />
            <Splitter />
            <SettingsPanel />
          </div>
        </div>
      </div>
      <StatusBar />
      <Taskbar />
    </div>
  );
}
